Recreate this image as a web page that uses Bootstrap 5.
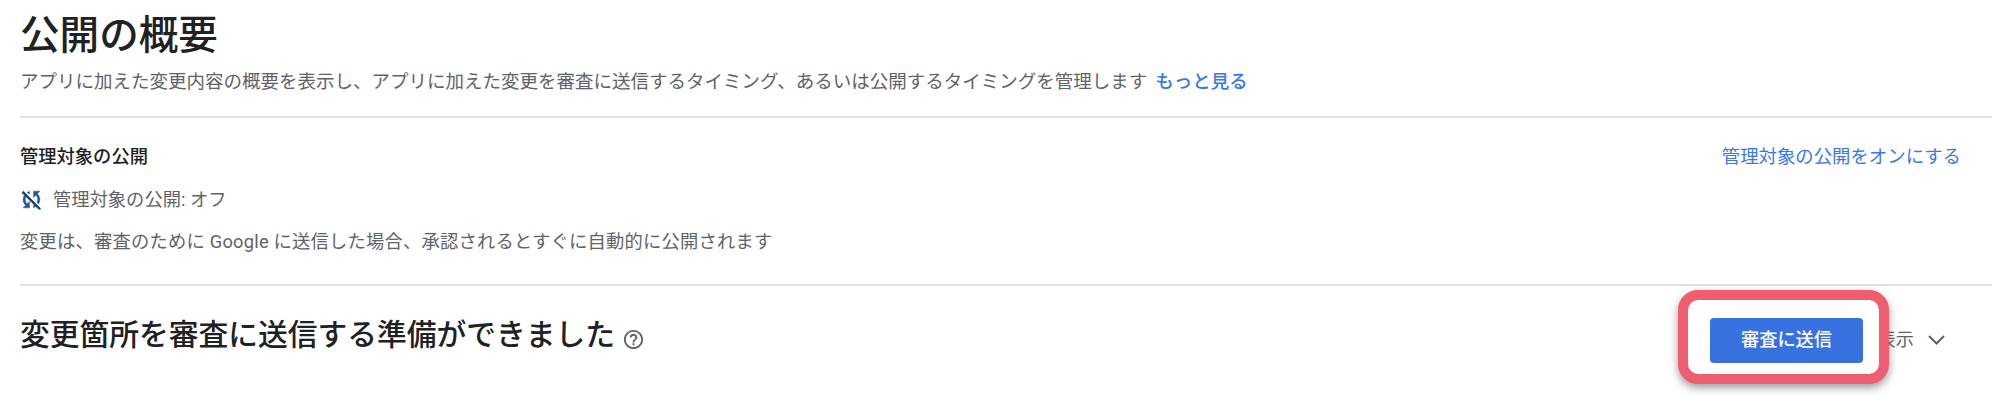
<!DOCTYPE html>
<html lang="ja">
<head>
<meta charset="utf-8">
<title>公開の概要</title>
<link href="https://cdn.jsdelivr.net/npm/bootstrap@5.3.0/dist/css/bootstrap.min.css" rel="stylesheet">
<style>
html,body{height:405px;overflow:hidden;background:#fff}
body{font-family:Roboto,"Noto Sans CJK JP",sans-serif;color:#202124}
.pub-page{width:2000px;height:405px;padding:12px 8px 0 20px;position:relative}
.pub-title{font-size:39.6px;line-height:48px;font-weight:500;margin:0}
.pub-desc{font-size:18.5px;line-height:28px;color:#5f6368;margin:8px 0 20px}
.pub-desc a,.pub-action{color:#3b78e7;text-decoration:none;font-weight:500}
.pub-desc a{margin-left:8px}
.pub-rule{height:2px;background:#dfe1e5}
.pub-section{height:168px;border-bottom:2px solid #dfe1e5;padding-top:27px}
.pub-sub{font-size:18.3px;line-height:24px;font-weight:500;margin:0}
.pub-action{font-size:18.4px;line-height:24px;font-weight:400;margin-right:31px}
.pub-state{font-size:18.3px;line-height:24px;color:#5f6368;margin-top:18px;gap:9px}
.pub-state svg{margin-left:-1px}
.pub-note{font-size:18.3px;line-height:24px;color:#5f6368;margin-top:18px;letter-spacing:.22px}
.pub-foot{height:104px;padding-right:47px}
.pub-h2{font-size:29.75px;line-height:40px;font-weight:500;margin:0 0 6px;gap:7px}
.pub-h2 svg{margin-top:8px}
.pub-more{font-size:18.2px;color:#5f6368;gap:14px;margin-top:4px}
.pub-callout{position:absolute;left:1678px;top:290px;width:211px;height:94px;padding:6px 0 0 6px;border:10px solid #ef5d70;border-radius:20px;background:#fff;box-shadow:0 4px 8px rgba(60,64,67,.5)}
.pub-send{width:153px;height:45px;background:#3871e0;border:0;border-radius:4px;color:#fff;font-size:18.2px;font-weight:500;padding:0}
</style>
</head>
<body>
<div class="pub-page">
  <h1 class="pub-title">公開の概要</h1>
  <p class="pub-desc">アプリに加えた変更内容の概要を表示し、アプリに加えた変更を審査に送信するタイミング、あるいは公開するタイミングを管理します<a href="#">もっと見る</a></p>
  <div class="pub-rule"></div>
  <section class="pub-section">
    <div class="d-flex justify-content-between align-items-center">
      <h2 class="pub-sub">管理対象の公開</h2>
      <a href="#" class="pub-action">管理対象の公開をオンにする</a>
    </div>
    <div class="pub-state d-flex align-items-center">
      <svg width="25" height="25" viewBox="0 0 24 24" fill="#1f5a94" stroke="#1f5a94" stroke-width=".5"><path d="M10 6.35V4.26c-.8.21-1.55.54-2.23.96l1.46 1.46c.25-.12.5-.24.77-.33zm-7.14-.94l2.36 2.36C4.45 8.99 4 10.44 4 12c0 2.21.91 4.2 2.36 5.64L4 20h6v-6l-2.24 2.24C6.68 15.15 6 13.66 6 12c0-1 .25-1.94.68-2.77l8.08 8.08c-.25.13-.5.25-.77.34v2.09c.8-.21 1.55-.54 2.23-.96l2.36 2.36 1.27-1.27L4.14 4.14 2.86 5.41zM20 4h-6v6l2.24-2.24C17.32 8.85 18 10.34 18 12c0 1-.25 1.94-.68 2.77l1.46 1.46C19.55 15.01 20 13.56 20 12c0-2.21-.91-4.2-2.36-5.64L20 4z"/><path d="M3.5 4.8L20.5 21.5" fill="none" stroke="#1b3f66" stroke-width="1.8"/></svg>
      <span>管理対象の公開: オフ</span>
    </div>
    <p class="pub-note mb-0">変更は、審査のために Google に送信した場合、承認されるとすぐに自動的に公開されます</p>
  </section>
  <div class="pub-foot d-flex justify-content-between align-items-center">
    <h2 class="pub-h2 d-flex align-items-center">変更箇所を審査に送信する準備ができました
      <svg width="23" height="23" viewBox="0 0 24 24" fill="#5f6368"><path d="M11 18h2v-2h-2v2zm1-16C6.48 2 2 6.48 2 12s4.48 10 10 10 10-4.48 10-10S17.52 2 12 2zm0 18c-4.41 0-8-3.59-8-8s3.59-8 8-8 8 3.59 8 8-3.59 8-8 8zm0-14c-2.21 0-4 1.79-4 4h2c0-1.1.9-2 2-2s2 .9 2 2c0 2-3 1.75-3 5h2c0-2.25 3-2.5 3-5 0-2.21-1.79-4-4-4z"/></svg>
    </h2>
    <div class="pub-more d-flex align-items-center">
      <span>変更を表示</span>
      <svg width="17" height="10" viewBox="0 0 17 10" fill="none" stroke="#5f6368" stroke-width="2"><path d="M1 1l7.5 7.5L16 1"/></svg>
    </div>
  </div>
  <div class="pub-callout d-flex align-items-center justify-content-center">
    <button type="button" class="btn pub-send">審査に送信</button>
  </div>
</div>
<script src="https://cdn.jsdelivr.net/npm/bootstrap@5.3.0/dist/js/bootstrap.bundle.min.js"></script>
</body>
</html>
